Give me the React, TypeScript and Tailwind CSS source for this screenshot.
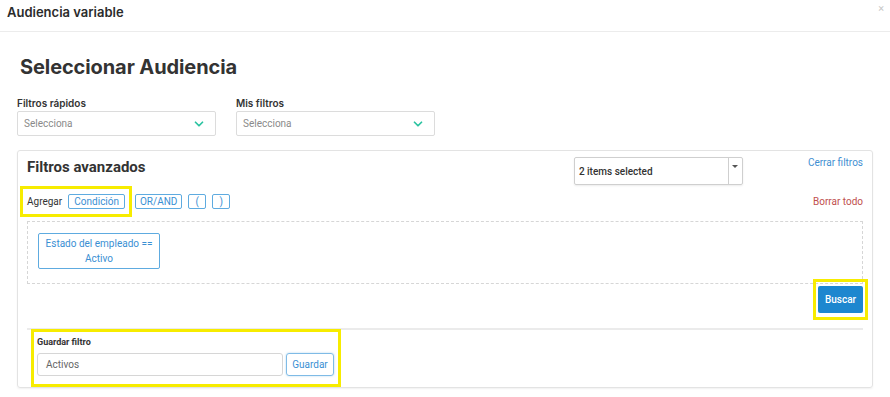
import { ChevronDown } from "lucide-react"

function QuickSelect({ label }: { label: string }) {
    return (
        <div className="w-[199px]">
            <div className="text-[10px] font-semibold text-[#333] leading-[14px] mb-[1px] font-['Inter',sans-serif]">{label}</div>
            <div className="h-[25px] border border-[#dcdcdc] rounded-[2px] flex items-center justify-between pl-[6px] pr-[9px]">
                <span className="text-[10px] text-[#8a8a8a]">Selecciona</span>
                <ChevronDown className="w-[14px] h-[14px] text-[#2bc3a1]" strokeWidth={3} />
            </div>
        </div>
    )
}

function ChipButton({ children, className = "" }: { children: React.ReactNode; className?: string }) {
    return (
        <button className={`h-[15px] border border-[#5eabe0] rounded-[2px] text-[10px] leading-none text-[#3a8fd3] flex items-center justify-center ${className}`}>
            {children}
        </button>
    )
}

export default function App() {
    return (
        <div className="w-[890px] h-[397px] bg-white overflow-hidden font-['Roboto',sans-serif] text-[#333]">
            <div className="h-[32px] border-b border-[#ececec] flex items-start justify-between pl-[7px] pr-[6px] pt-[3px]">
                <h1 className="text-[13px] font-semibold font-['Inter',sans-serif] text-[#2b2b2b] leading-[18px]">Audiencia variable</h1>
                <span className="text-[11px] text-[#c8c8c8] leading-[12px]">×</span>
            </div>

            <div className="px-[17px]">
                <h2 className="mt-[21px] ml-[3px] text-[20px] font-bold font-['Inter',sans-serif] text-[#333] leading-[28px] tracking-[-0.1px]">
                    Seleccionar Audiencia
                </h2>

                <div className="mt-[15px] flex gap-[20px]">
                    <QuickSelect label="Filtros rápidos" />
                    <QuickSelect label="Mis filtros" />
                </div>

                <div className="mt-[14px] w-[856px] h-[238px] border border-[#e3e3e3] rounded-[3px] shadow-[0_1px_2px_rgba(0,0,0,0.06)] px-[9px]">
                    <div className="flex items-start justify-between pt-[6px]">
                        <h3 className="text-[15px] font-bold text-[#333] leading-[18px] mt-[1px]">Filtros avanzados</h3>
                        <div className="flex items-start gap-[65px]">
                            <div className="w-[169px] h-[28px] border border-[#cfcfcf] rounded-[2px] shadow-[0_1px_2px_rgba(0,0,0,0.08)] flex">
                                <div className="flex-1 flex items-center pl-[4px] text-[10px] font-medium text-[#333]">2 items selected</div>
                                <div className="w-[14px] border-l border-[#cfcfcf] flex justify-center pt-[7px]">
                                    <div className="w-0 h-0 border-l-[3px] border-r-[3px] border-t-[3px] border-l-transparent border-r-transparent border-t-[#555]" />
                                </div>
                            </div>
                            <span className="text-[10px] text-[#3f8fd2] leading-[12px]">Cerrar filtros</span>
                        </div>
                    </div>

                    <div className="mt-[4px] flex items-center justify-between">
                        <div className="flex items-center gap-[6px]">
                            <div className="-ml-[4px] px-[4px] py-[5px] flex items-center gap-[6px] outline-[3px] outline-solid outline-[#f7ec00]">
                                <span className="text-[10px] text-[#333]">Agregar</span>
                                <ChipButton className="w-[57px]">Condición</ChipButton>
                            </div>
                            <ChipButton className="w-[47px]">OR/AND</ChipButton>
                            <ChipButton className="w-[18px]">(</ChipButton>
                            <ChipButton className="w-[18px]">)</ChipButton>
                        </div>
                        <span className="text-[10px] text-[#c0504d]">Borrar todo</span>
                    </div>

                    <div className="mt-[7px] h-[63px] border border-dashed border-[#d6d6d6] pl-[10px] pt-[11px]">
                        <div className="w-[122px] h-[36px] border border-[#5eabe0] rounded-[2px] flex flex-col items-center justify-center text-[10px] leading-[15px] text-[#3a8fd3]">
                            <span>Estado del empleado ==</span>
                            <span>Activo</span>
                        </div>
                    </div>

                    <div className="flex justify-end pt-[2px]">
                        <div className="-my-[4px] -mr-[2px] px-[2px] py-[4px] outline-[3px] outline-solid outline-[#f7ec00]">
                            <button className="block w-[45px] h-[27px] bg-[#1d87cf] rounded-[2px] text-white text-[10px] font-medium">
                                Buscar
                            </button>
                        </div>
                    </div>

                    <div className="mt-[15px] h-[2px] bg-[#ebebeb]" />

                    <div className="mt-[2px] ml-[7px] w-[304px] px-[3px] pt-[4px] pb-[8px] outline-[3px] outline-solid outline-[#f7ec00]">
                        <div className="text-[9px] font-bold text-[#333] leading-[12px]">Guardar filtro</div>
                        <div className="mt-[5px] flex gap-[3px]">
                            <div className="w-[246px] h-[23px] border border-[#d6d6d6] rounded-[3px] flex items-center pl-[8px] text-[10px] text-[#666]">
                                Activos
                            </div>
                            <button className="w-[48px] h-[23px] border border-[#7fbbe6] rounded-[3px] text-[10px] text-[#3a8fd3] shadow-[0_0_2px_rgba(94,171,224,0.5)]">
                                Guardar
                            </button>
                        </div>
                    </div>
                </div>
            </div>
        </div>
    )
}
